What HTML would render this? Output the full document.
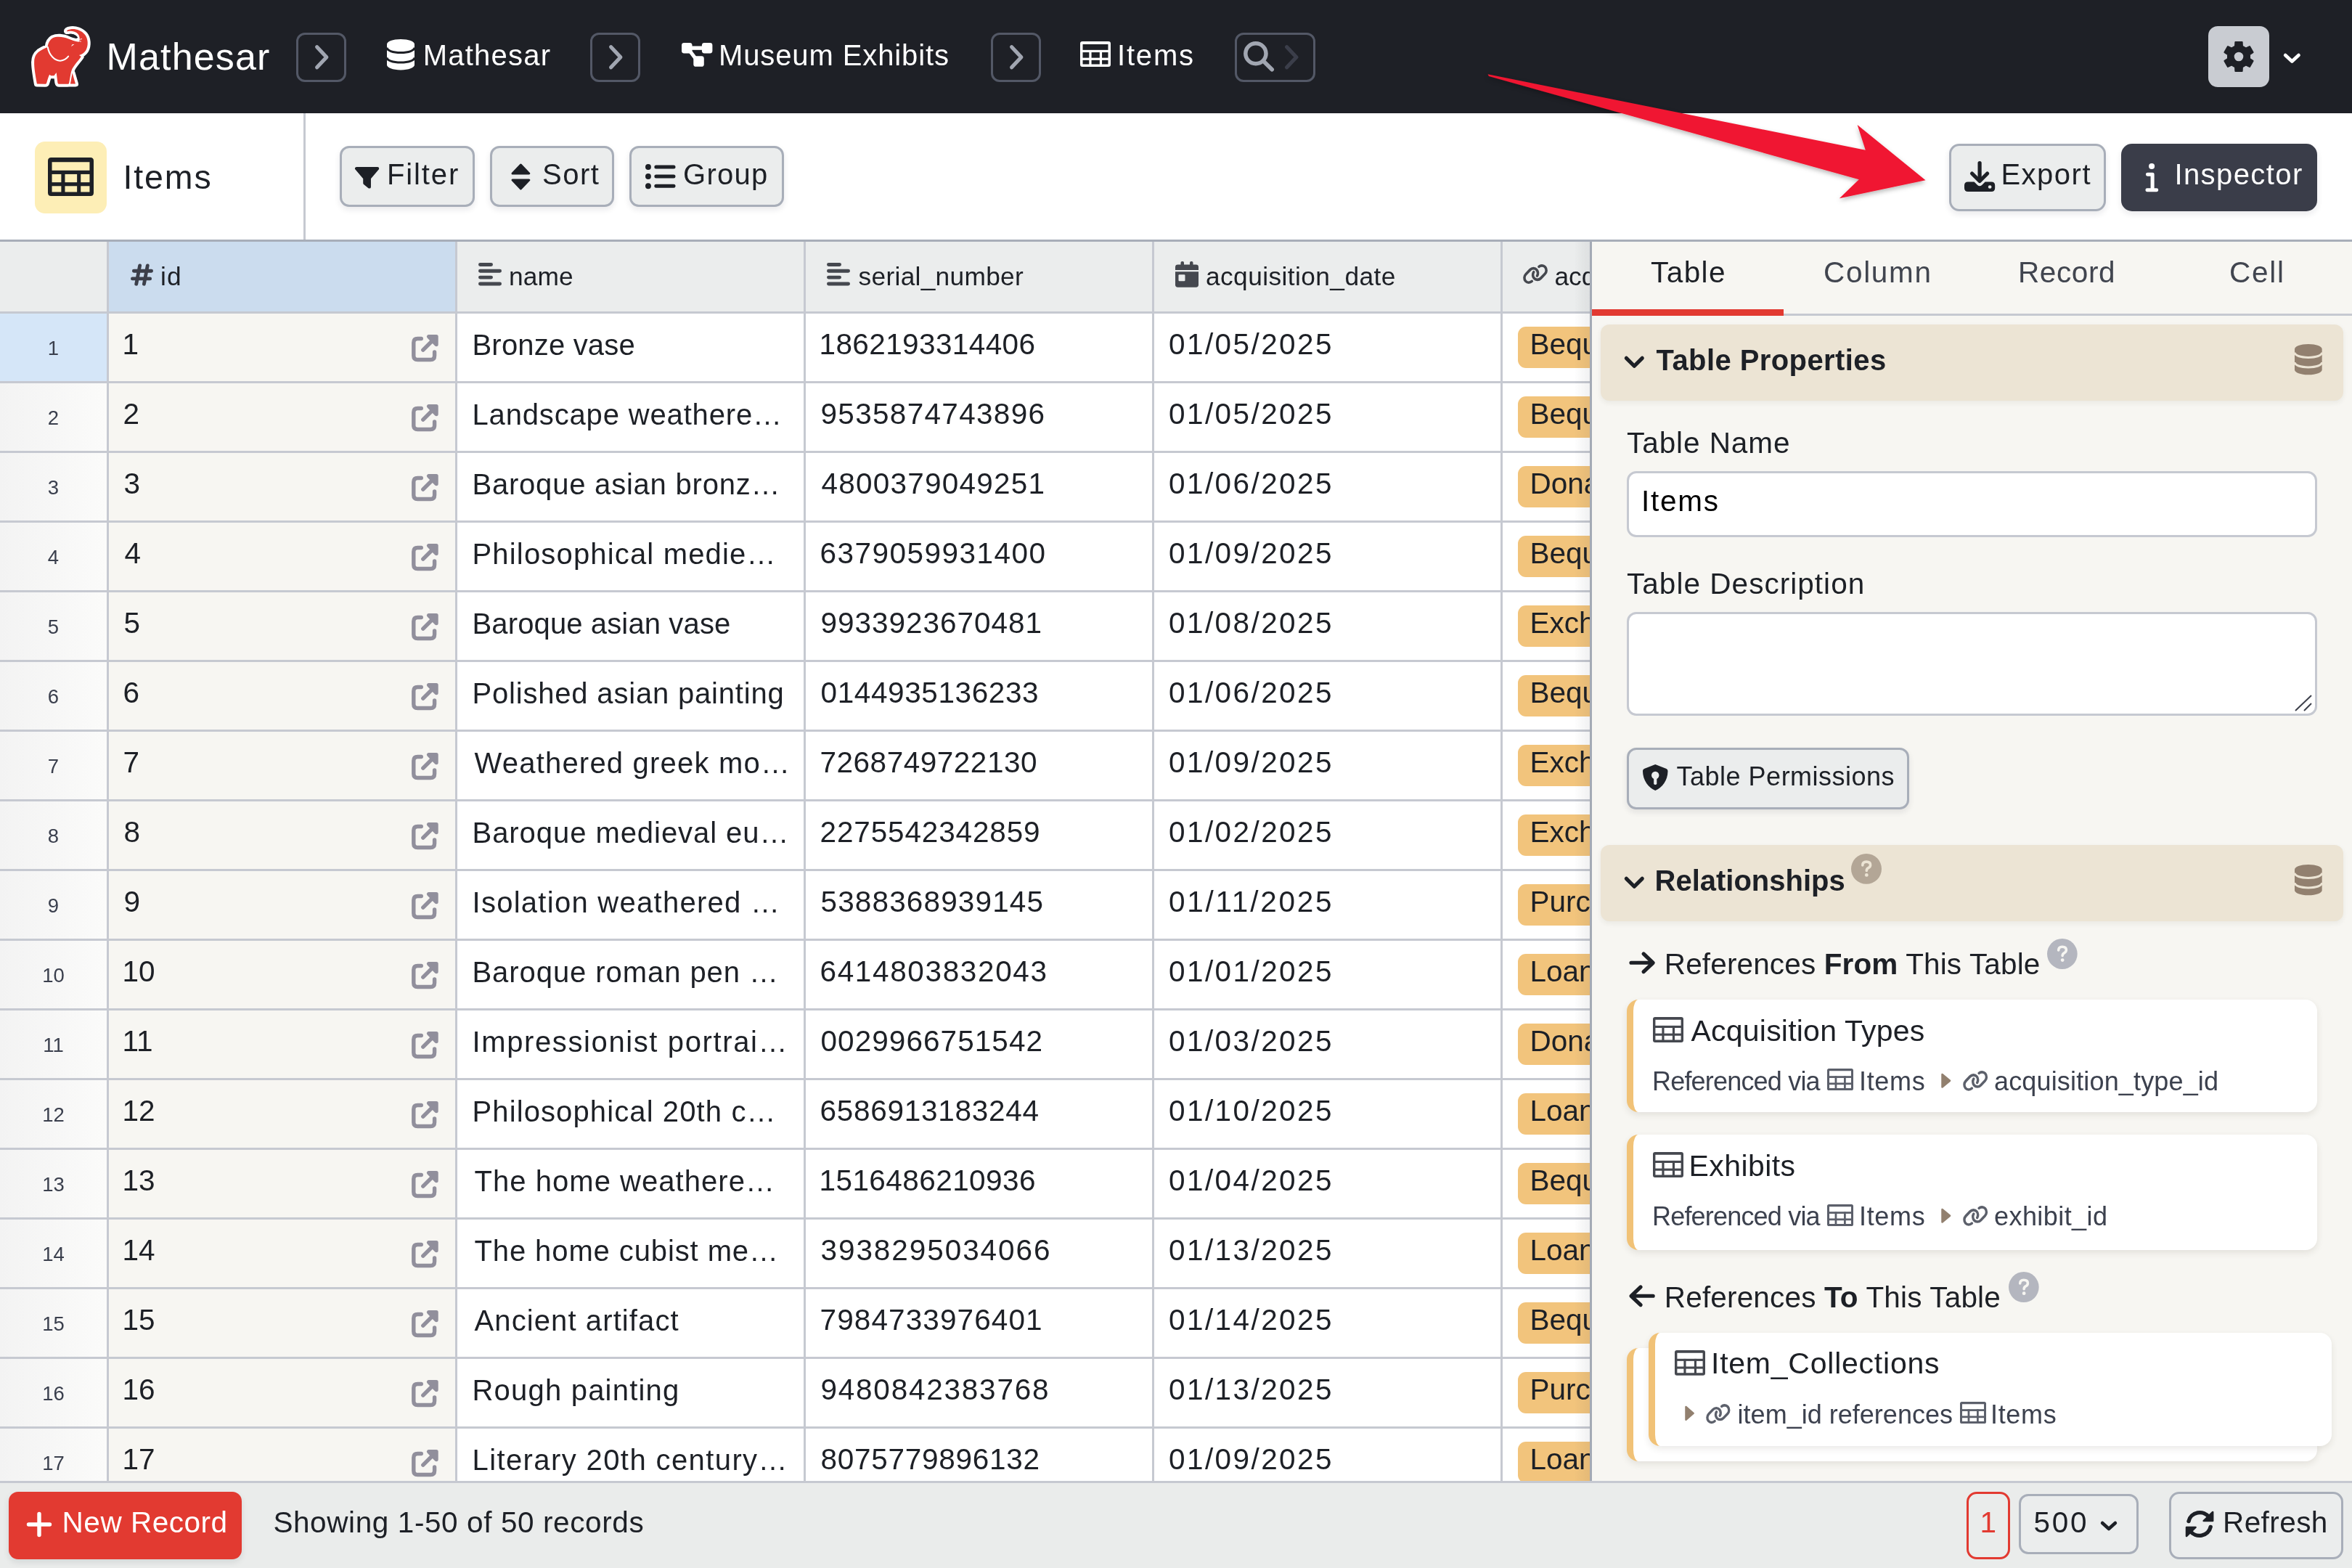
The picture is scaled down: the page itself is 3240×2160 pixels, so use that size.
<!DOCTYPE html>
<html lang="en"><head><meta charset="utf-8"><title>Items | Mathesar</title><style>
html,body{margin:0;padding:0}
body{width:3240px;height:2160px;position:relative;overflow:hidden;background:#fff;
 font-family:"Liberation Sans",sans-serif;-webkit-font-smoothing:antialiased}
#root{position:absolute;left:0;top:0;width:3240px;height:2160px;will-change:transform}
.a{position:absolute}
.t{position:absolute;white-space:pre;font-family:"Liberation Sans",sans-serif}
.t b{font-weight:700}
</style></head>
<body>
<div id="root">
<div class="a" style="left:0.0px;top:0.0px;width:3240.0px;height:156.0px;background:#1e2026;"></div>
<svg class="a" style="left:0;top:0;width:160px;height:156px" viewBox="0 0 160 156"><g transform="translate(30,25) scale(0.066934)"><path d="M312,1352 C285,1200 250,1010 256,900 C258,800 290,742 352,692 C405,652 470,622 532,596 C540,520 575,445 640,408 C720,372 850,380 960,425 C1030,452 1090,478 1175,488 C1200,440 1195,380 1160,330 C1120,280 1040,262 985,266 C955,268 935,275 925,268 C925,250 960,232 1010,226 C1110,215 1230,250 1300,340 C1365,425 1375,560 1320,660 C1290,710 1240,748 1180,762 L1222,790 C1160,880 1080,960 1040,1040 C1010,1100 1000,1200 975,1330 C970,1352 960,1356 940,1356 L770,1356 C750,1356 742,1345 738,1325 L712,1120 L665,1185 L600,1185 L570,1160 C545,1215 525,1280 512,1330 C508,1350 498,1356 480,1356 Z" fill="#fff" stroke="#fff" stroke-width="120" stroke-linejoin="round"/><path d="M1040,1128 L1105,1352 L1000,1352 Z" fill="#fff" stroke="#fff" stroke-width="120" stroke-linejoin="round"/><path d="M925,340 C1000,312 1110,325 1155,405 C1100,430 1000,392 925,340Z" fill="#1e2026"/><path d="M312,1352 C285,1200 250,1010 256,900 C258,800 290,742 352,692 C405,652 470,622 532,596 C540,520 575,445 640,408 C720,372 850,380 960,425 C1030,452 1090,478 1175,488 C1200,440 1195,380 1160,330 C1120,280 1040,262 985,266 C955,268 935,275 925,268 C925,250 960,232 1010,226 C1110,215 1230,250 1300,340 C1365,425 1375,560 1320,660 C1290,710 1240,748 1180,762 L1222,790 C1160,880 1080,960 1040,1040 C1010,1100 1000,1200 975,1330 C970,1352 960,1356 940,1356 L770,1356 C750,1356 742,1345 738,1325 L712,1120 L665,1185 L600,1185 L570,1160 C545,1215 525,1280 512,1330 C508,1350 498,1356 480,1356 Z" fill="#e23a31"/><path d="M1040,1128 L1105,1352 L1000,1352 Z" fill="#e23a31"/><path d="M535,598 C560,760 680,882 795,876 C862,870 922,832 958,786" fill="none" stroke="#fff" stroke-width="30" stroke-linecap="round"/><path d="M1022,585 C1022,545 1050,522 1082,548 C1055,548 1038,562 1022,585Z" fill="#fff"/><path d="M1180,440 L1235,428 M1175,470 L1215,480" stroke="#fff" stroke-width="14" stroke-linecap="round"/></g></svg>
<span class="t" style="left:146.50px;top:52.38px;font-size:52px;line-height:52px;color:#fff;letter-spacing:1.151px;">Mathesar</span>
<div class="a" style="left:408.0px;top:45.4px;width:68.5px;height:68.1px;box-sizing:border-box;border:3px solid #535866;border-radius:12px"></div>
<svg style="position:absolute;left:435.0px;top:62.5px;width:16.5px;height:31.5px;overflow:visible" viewBox="0 0 10 18" preserveAspectRatio="none" ><polyline points="1,1 9,9 1,17" fill="none" stroke="#a1a6b1" stroke-width="5.2" stroke-linecap="round" stroke-linejoin="round" vector-effect="non-scaling-stroke"/></svg>
<svg style="position:absolute;left:533.0px;top:54.0px;width:38.0px;height:42.4px;overflow:visible" viewBox="0 0 38 42" preserveAspectRatio="none" ><path fill="#fff" d="M0,7 C0,3 8,0 19,0 S38,3 38,7 V35 C38,39 30,42 19,42 S0,39 0,35Z"/><path fill="none" stroke="#1e2026" stroke-width="3" d="M0,11.500 C0,15.500 8,18.300 19,18.300 S38,15.500 38,11.500"/><path fill="none" stroke="#1e2026" stroke-width="3" d="M0,25 C0,29 8,31.800 19,31.800 S38,29 38,25"/></svg>
<span class="t" style="left:582.70px;top:55.94px;font-size:40px;line-height:40px;color:#fff;letter-spacing:1.226px;">Mathesar</span>
<div class="a" style="left:813.0px;top:45.4px;width:68.6px;height:68.1px;box-sizing:border-box;border:3px solid #535866;border-radius:12px"></div>
<svg style="position:absolute;left:840.0px;top:62.5px;width:16.5px;height:31.5px;overflow:visible" viewBox="0 0 10 18" preserveAspectRatio="none" ><polyline points="1,1 9,9 1,17" fill="none" stroke="#a1a6b1" stroke-width="5.2" stroke-linecap="round" stroke-linejoin="round" vector-effect="non-scaling-stroke"/></svg>
<svg style="position:absolute;left:938.8px;top:58.5px;width:42.4px;height:32.8px;overflow:visible" viewBox="0 0 42.4 32.8" preserveAspectRatio="none" ><g fill="#fff"><rect x="0" y="0" width="14.500" height="14.500" rx="3.400"/><rect x="27.900" y="0" width="14.500" height="14.500" rx="3.400"/><rect x="16.300" y="18.300" width="14.500" height="14.500" rx="3.400"/><rect x="12" y="4.500" width="18" height="5.300"/></g><path d="M11.500,11.500 L19.500,22" stroke="#fff" stroke-width="5" fill="none"/></svg>
<span class="t" style="left:990.00px;top:55.94px;font-size:40px;line-height:40px;color:#fff;letter-spacing:0.889px;">Museum Exhibits</span>
<div class="a" style="left:1365.0px;top:45.4px;width:68.7px;height:68.1px;box-sizing:border-box;border:3px solid #535866;border-radius:12px"></div>
<svg style="position:absolute;left:1392.0px;top:62.5px;width:16.5px;height:31.5px;overflow:visible" viewBox="0 0 10 18" preserveAspectRatio="none" ><polyline points="1,1 9,9 1,17" fill="none" stroke="#a1a6b1" stroke-width="5.2" stroke-linecap="round" stroke-linejoin="round" vector-effect="non-scaling-stroke"/></svg>
<svg style="position:absolute;left:1488.0px;top:57.0px;width:42.0px;height:35.0px;overflow:visible" viewBox="0 0 42 35" preserveAspectRatio="none" ><path fill="#fff" fill-rule="evenodd" d="M3,0 H39 Q42,0 42,3 V32 Q42,35 39,35 H3 Q0,35 0,32 V3 Q0,0 3,0Z M3.5,3.9200000000000004 V31.5 H38.5 V3.9200000000000004Z"/><g fill="#fff"><rect x="0" y="11.84" width="42" height="3.22"/><rect x="0" y="22.64" width="42" height="3.22"/><rect x="12.34" y="12" width="3.22" height="22"/><rect x="26.84" y="12" width="3.22" height="22"/></g></svg>
<span class="t" style="left:1539.00px;top:55.94px;font-size:40px;line-height:40px;color:#fff;letter-spacing:1.802px;">Items</span>
<div class="a" style="left:1701.0px;top:45.4px;width:110.5px;height:68.1px;box-sizing:border-box;border:3px solid #535866;border-radius:12px"></div>
<svg style="position:absolute;left:1713.0px;top:57.4px;width:42.0px;height:41.6px;overflow:visible" viewBox="0 0 42 42" preserveAspectRatio="none" ><circle cx="16.900" cy="16.900" r="14.100" fill="none" stroke="#a1a6b1" stroke-width="5.500"/><path d="M27.500,27.500 L39.200,39.200" stroke="#a1a6b1" stroke-width="5.600" stroke-linecap="round"/></svg>
<svg style="position:absolute;left:1770.5px;top:62.5px;width:16.5px;height:31.5px;overflow:visible" viewBox="0 0 10 18" preserveAspectRatio="none" ><polyline points="1,1 9,9 1,17" fill="none" stroke="#3b3e4a" stroke-width="5.2" stroke-linecap="round" stroke-linejoin="round" vector-effect="non-scaling-stroke"/></svg>
<div class="a" style="left:3041.9px;top:35.8px;width:84.1px;height:84.3px;background:#c9ccd2;border-radius:13px"></div>
<svg style="position:absolute;left:3063.4px;top:56.8px;width:42.0px;height:42.0px;overflow:visible" viewBox="0 0 42 42" preserveAspectRatio="none" ><path d="M16.15,6.59 L16.45,1.11 L25.55,1.11 L25.85,6.59 L31.05,9.60 L35.94,7.11 L40.50,15.00 L35.90,18.00 L35.90,24.00 L40.50,27.00 L35.94,34.89 L31.05,32.40 L25.85,35.41 L25.55,40.89 L16.45,40.89 L16.15,35.41 L10.95,32.40 L6.06,34.89 L1.50,27.00 L6.10,24.00 L6.10,18.00 L1.50,15.00 L6.06,7.11 L10.95,9.60Z M13.60,21.00 a7.40,7.40 0 1,0 14.80,0 a7.40,7.40 0 1,0 -14.80,0Z" fill="#1e2026" fill-rule="evenodd" stroke="#1e2026" stroke-width="2.2" stroke-linejoin="round"/></svg>
<svg style="position:absolute;left:3146.6px;top:75.0px;width:20.7px;height:10.6px;overflow:visible" viewBox="0 0 18 10" preserveAspectRatio="none" ><polyline points="1,1 9,9 17,1" fill="none" stroke="#fff" stroke-width="4.600" stroke-linecap="round" stroke-linejoin="round" vector-effect="non-scaling-stroke"/></svg>
<div class="a" style="left:0.0px;top:156.0px;width:3240.0px;height:174.0px;background:#fff;"></div>
<div class="a" style="left:48.0px;top:195.0px;width:99.0px;height:99.0px;background:#fdeeb6;border-radius:14px"></div>
<svg style="position:absolute;left:66.0px;top:217.0px;width:63.0px;height:53.0px;overflow:visible" viewBox="0 0 42 35" preserveAspectRatio="none" ><path fill="#1d2026" fill-rule="evenodd" d="M3,0 H39 Q42,0 42,3 V32 Q42,35 39,35 H3 Q0,35 0,32 V3 Q0,0 3,0Z M3.7,4.144000000000001 V31.3 H38.3 V4.144000000000001Z"/><g fill="#1d2026"><rect x="0" y="11.75" width="42" height="3.40"/><rect x="0" y="22.55" width="42" height="3.40"/><rect x="12.25" y="12" width="3.40" height="22"/><rect x="26.75" y="12" width="3.40" height="22"/></g></svg>
<span class="t" style="left:169.50px;top:221.34px;font-size:46.5px;line-height:46.5px;color:#1d2026;letter-spacing:1.891px;">Items</span>
<div class="a" style="left:417.5px;top:156.0px;width:3.0px;height:174.0px;background:#c6c9d1;"></div>
<div class="a" style="left:468.0px;top:201.0px;width:186.0px;height:84.0px;box-sizing:border-box;background:#ebeded;border:3px solid #a8aeb9;border-radius:13px;box-shadow:0 4px 8px rgba(20,25,40,.09);"></div>
<svg style="position:absolute;left:488.8px;top:229.6px;width:33.2px;height:29.8px;overflow:visible" viewBox="0 0 34 30" preserveAspectRatio="none" ><path fill="#1d2026" stroke="#1d2026" stroke-width="4.400" stroke-linejoin="round" d="M2.200,2.200 H31.800 L20.300,15.500 V27.600 L13.700,22.500 V15.500 Z"/></svg>
<span class="t" style="left:533.00px;top:220.44px;font-size:40px;line-height:40px;color:#1d2026;letter-spacing:1.887px;">Filter</span>
<div class="a" style="left:675.0px;top:201.0px;width:171.0px;height:84.0px;box-sizing:border-box;background:#ebeded;border:3px solid #a8aeb9;border-radius:13px;box-shadow:0 4px 8px rgba(20,25,40,.09);"></div>
<svg style="position:absolute;left:703.6px;top:224.5px;width:26.8px;height:37.0px;overflow:visible" viewBox="0 0 27 37" preserveAspectRatio="none" ><path fill="#1d2026" stroke="#1d2026" stroke-width="3" stroke-linejoin="round" d="M13.500,2 L25,14 H2Z"/><path fill="#1d2026" stroke="#1d2026" stroke-width="3" stroke-linejoin="round" d="M13.500,35 L25,23 H2Z"/></svg>
<span class="t" style="left:747.00px;top:220.44px;font-size:40px;line-height:40px;color:#1d2026;letter-spacing:1.485px;">Sort</span>
<div class="a" style="left:867.0px;top:201.0px;width:213.0px;height:84.0px;box-sizing:border-box;background:#ebeded;border:3px solid #a8aeb9;border-radius:13px;box-shadow:0 4px 8px rgba(20,25,40,.09);"></div>
<svg style="position:absolute;left:888.5px;top:225.8px;width:41.5px;height:34.2px;overflow:visible" viewBox="0 0 42 34" preserveAspectRatio="none" ><circle cx="4" cy="4" r="4" fill="#1d2026"/><path d="M15,4 H39.500" stroke="#1d2026" stroke-width="5" stroke-linecap="round"/><circle cx="4" cy="17" r="4" fill="#1d2026"/><path d="M15,17 H39.500" stroke="#1d2026" stroke-width="5" stroke-linecap="round"/><circle cx="4" cy="30" r="4" fill="#1d2026"/><path d="M15,30 H39.500" stroke="#1d2026" stroke-width="5" stroke-linecap="round"/></svg>
<span class="t" style="left:941.00px;top:220.44px;font-size:40px;line-height:40px;color:#1d2026;letter-spacing:1.269px;">Group</span>
<div class="a" style="left:2685.4px;top:198.0px;width:215.3px;height:92.8px;box-sizing:border-box;background:#ebeded;border:3px solid #a8aeb9;border-radius:14px;box-shadow:0 4px 8px rgba(20,25,40,.09);"></div>
<svg style="position:absolute;left:2705.8px;top:222.0px;width:42.2px;height:42.0px;overflow:visible" viewBox="0 0 42 42" preserveAspectRatio="none" ><path d="M21,2.500 V26" stroke="#1d2026" stroke-width="5.200" stroke-linecap="round" fill="none"/><path d="M10.500,17 L21,27.500 L31.500,17" stroke="#1d2026" stroke-width="5.200" stroke-linecap="round" stroke-linejoin="round" fill="none"/><path fill="#1d2026" d="M5,28.500 H13.500 L18,33 Q21,35.500 24,33 L28.500,28.500 H37 Q42,28.500 42,33.500 V37 Q42,42 37,42 H5 Q0,42 0,37 V33.500 Q0,28.500 5,28.500Z"/><circle cx="35" cy="35.500" r="2.300" fill="#ebeded"/></svg>
<span class="t" style="left:2756.40px;top:220.44px;font-size:40px;line-height:40px;color:#1d2026;letter-spacing:1.502px;">Export</span>
<div class="a" style="left:2921.9px;top:198.0px;width:270.4px;height:92.8px;box-sizing:border-box;background:#3a3d49;border-radius:15px;box-shadow:0 4px 8px rgba(20,25,40,.09);"></div>
<svg style="position:absolute;left:2955.8px;top:224.5px;width:16.2px;height:39.5px;overflow:visible" viewBox="0 0 16 40" preserveAspectRatio="none" ><circle cx="8" cy="4" r="4" fill="#fff"/><path d="M2.500,15.500 H9 V37 M2,37.300 H14.500" stroke="#fff" stroke-width="5" stroke-linecap="round" stroke-linejoin="round" fill="none"/></svg>
<span class="t" style="left:2995.40px;top:220.44px;font-size:40px;line-height:40px;color:#fff;letter-spacing:1.424px;">Inspector</span>
<svg class="a" style="left:0;top:0;width:3240px;height:400px;z-index:50" viewBox="0 0 3240 400"><defs><filter id="ash" x="-5%" y="-20%" width="110%" height="150%"><feDropShadow dx="0" dy="3" stdDeviation="3" flood-color="#000" flood-opacity=".28"/></filter></defs><path filter="url(#ash)" fill="#f01830" d="M2049.500,102.200 L2569.800,206.800 L2558.600,172 L2652.500,248.300 L2533.900,273.200 L2560.800,247.300 L2051,105 Z"/></svg>
<div class="a" style="left:0.0px;top:330.0px;width:3240.0px;height:3.0px;background:#a8aeb9;"></div>
<div class="a" style="left:0.0px;top:333.0px;width:2190.0px;height:1707.0px;background:#fff;"></div>
<div class="a" style="left:0.0px;top:333.0px;width:2190.0px;height:96.0px;background:#ebeded;"></div>
<div class="a" style="left:150.0px;top:333.0px;width:477.0px;height:96.0px;background:#cbdcee;"></div>
<div class="a" style="left:0.0px;top:432.0px;width:147.0px;height:1608.0px;background:#f7f7f7;background:linear-gradient(90deg,#f3f3f3,#fbfbfa)"></div>
<div class="a" style="left:0.0px;top:432.0px;width:147.0px;height:93.0px;background:#d5e6f8;"></div>
<div class="a" style="left:150.0px;top:432.0px;width:477.0px;height:1608.0px;background:#f7f6f2;"></div>
<div class="a" style="left:0.0px;top:429.0px;width:2190.0px;height:3.0px;background:#c6c9d1;"></div>
<div class="a" style="left:0.0px;top:525.0px;width:2190.0px;height:3.0px;background:#c6c9d1;"></div>
<div class="a" style="left:0.0px;top:621.0px;width:2190.0px;height:3.0px;background:#c6c9d1;"></div>
<div class="a" style="left:0.0px;top:717.0px;width:2190.0px;height:3.0px;background:#c6c9d1;"></div>
<div class="a" style="left:0.0px;top:813.0px;width:2190.0px;height:3.0px;background:#c6c9d1;"></div>
<div class="a" style="left:0.0px;top:909.0px;width:2190.0px;height:3.0px;background:#c6c9d1;"></div>
<div class="a" style="left:0.0px;top:1005.0px;width:2190.0px;height:3.0px;background:#c6c9d1;"></div>
<div class="a" style="left:0.0px;top:1101.0px;width:2190.0px;height:3.0px;background:#c6c9d1;"></div>
<div class="a" style="left:0.0px;top:1197.0px;width:2190.0px;height:3.0px;background:#c6c9d1;"></div>
<div class="a" style="left:0.0px;top:1293.0px;width:2190.0px;height:3.0px;background:#c6c9d1;"></div>
<div class="a" style="left:0.0px;top:1389.0px;width:2190.0px;height:3.0px;background:#c6c9d1;"></div>
<div class="a" style="left:0.0px;top:1485.0px;width:2190.0px;height:3.0px;background:#c6c9d1;"></div>
<div class="a" style="left:0.0px;top:1581.0px;width:2190.0px;height:3.0px;background:#c6c9d1;"></div>
<div class="a" style="left:0.0px;top:1677.0px;width:2190.0px;height:3.0px;background:#c6c9d1;"></div>
<div class="a" style="left:0.0px;top:1773.0px;width:2190.0px;height:3.0px;background:#c6c9d1;"></div>
<div class="a" style="left:0.0px;top:1869.0px;width:2190.0px;height:3.0px;background:#c6c9d1;"></div>
<div class="a" style="left:0.0px;top:1965.0px;width:2190.0px;height:3.0px;background:#c6c9d1;"></div>
<div class="a" style="left:147.0px;top:333.0px;width:3.0px;height:1707.0px;background:#c6c9d1;"></div>
<div class="a" style="left:627.0px;top:333.0px;width:3.0px;height:1707.0px;background:#c6c9d1;"></div>
<div class="a" style="left:1107.0px;top:333.0px;width:3.0px;height:1707.0px;background:#c6c9d1;"></div>
<div class="a" style="left:1587.0px;top:333.0px;width:3.0px;height:1707.0px;background:#c6c9d1;"></div>
<div class="a" style="left:2067.0px;top:333.0px;width:3.0px;height:1707.0px;background:#c6c9d1;"></div>
<svg style="position:absolute;left:179.5px;top:362.7px;width:31.0px;height:31.1px;overflow:visible" viewBox="0 0 32 32" preserveAspectRatio="none" ><g stroke="#3c3f4a" stroke-width="5" stroke-linecap="round" fill="none"><path d="M4.500,10.500 H29.500 M2.500,21.500 H27.500 M13,3 L8,29 M24,3 L19,29"/></g></svg>
<span class="t" style="left:221.00px;top:363.32px;font-size:35.3px;line-height:35.3px;color:#1d2026;letter-spacing:1.158px;">id</span>
<svg style="position:absolute;left:659.0px;top:362.4px;width:32.0px;height:31.4px;overflow:visible" viewBox="0 0 32 32" preserveAspectRatio="none" ><g stroke="#45484f" stroke-width="5" stroke-linecap="round" fill="none"><path d="M2.500,2.500 H17.500 M2.500,11.500 H29.500 M2.500,20.500 H17.500 M2.500,29.500 H29.500"/></g></svg>
<span class="t" style="left:701.00px;top:363.32px;font-size:35.3px;line-height:35.3px;color:#1d2026;letter-spacing:0.112px;">name</span>
<svg style="position:absolute;left:1139.0px;top:362.4px;width:32.0px;height:31.4px;overflow:visible" viewBox="0 0 32 32" preserveAspectRatio="none" ><g stroke="#45484f" stroke-width="5" stroke-linecap="round" fill="none"><path d="M2.500,2.500 H17.500 M2.500,11.500 H29.500 M2.500,20.500 H17.500 M2.500,29.500 H29.500"/></g></svg>
<span class="t" style="left:1182.60px;top:363.32px;font-size:35.3px;line-height:35.3px;color:#1d2026;letter-spacing:0.292px;">serial_number</span>
<svg style="position:absolute;left:1619.0px;top:359.7px;width:32.0px;height:35.7px;overflow:visible" viewBox="0 0 32 36" preserveAspectRatio="none" ><rect x="7.500" y="0" width="4.500" height="8" rx="2" fill="#45484f"/><rect x="20" y="0" width="4.500" height="8" rx="2" fill="#45484f"/><path fill="#45484f" d="M3.500,4.500 H28.500 Q32,4.500 32,8 V12 H0 V8 Q0,4.500 3.500,4.500Z"/><path fill="#45484f" d="M0,14.500 H32 V32.500 Q32,36 28.500,36 H3.500 Q0,36 0,32.500Z"/><rect x="4.500" y="18.500" width="9" height="9" rx="1.200" fill="#ebeded"/></svg>
<span class="t" style="left:1661.00px;top:363.32px;font-size:35.3px;line-height:35.3px;color:#1d2026;letter-spacing:0.415px;">acquisition_date</span>
<svg style="position:absolute;left:2098.0px;top:364.4px;width:34.0px;height:27.2px;overflow:visible" viewBox="460 385 900 695" preserveAspectRatio="none" ><g fill="none" stroke="#45484f" stroke-width="94" stroke-linecap="round"><path d="M785,985 C720,1040 620,1045 555,980 C490,910 500,800 565,735 L720,580 C790,510 900,515 960,580 C1015,640 1015,740 975,795"/><path d="M1040,470 C1100,420 1200,415 1265,480 C1330,550 1325,660 1260,725 L1105,880 C1035,950 925,945 865,880 C810,820 805,720 850,660"/></g></svg>
<span class="t" style="left:2141.40px;top:363.32px;font-size:35.3px;line-height:35.3px;color:#1d2026;letter-spacing:0.000px;clip-path:inset(-10px 0 -10px 0);">acquisition_type_id</span>
<div class="a" style="left:0;top:333px;width:2190px;height:1707px;overflow:hidden">
<span class="t" style="left:0;width:147px;text-align:center;top:132.92px;font-size:27.500px;line-height:27.500px;color:#3a3f4d">1</span>
<span class="t" style="left:168.50px;top:121.42px;font-size:40.5px;line-height:40.5px;color:#1d2026;letter-spacing:0.000px;">1</span>
<svg style="position:absolute;left:566.6px;top:128.4px;width:36.7px;height:37.3px;overflow:visible" viewBox="0 0 36.7 37.3" preserveAspectRatio="none" ><path d="M13.3,5.500 H8.300 Q2.800,5.500 2.800,11 V29 Q2.800,34.500 8.300,34.500 H26.200 Q31.600,34.500 31.600,29 V24" fill="none" stroke="#918f9c" stroke-width="5.400" stroke-linecap="round"/><path d="M15.800,21.200 L30,7" stroke="#918f9c" stroke-width="5.400" stroke-linecap="round" fill="none"/><path d="M23.500,2.600 H34.100 V13.600Z" fill="#918f9c" stroke="#918f9c" stroke-width="5.200" stroke-linejoin="round"/></svg>
<span class="t" style="left:650.50px;top:121.84px;font-size:40px;line-height:40px;color:#1d2026;letter-spacing:0.190px;">Bronze vase</span>
<span class="t" style="left:1128.50px;top:121.42px;font-size:40.5px;line-height:40.5px;color:#1d2026;letter-spacing:0.392px;">1862193314406</span>
<span class="t" style="left:1610.00px;top:121.42px;font-size:40.5px;line-height:40.5px;color:#1d2026;letter-spacing:2.425px;">01/05/2025</span>
<div class="a" style="left:2091px;top:117.0px;width:200px;height:57px;background:#f2c47c;border-radius:11px"></div>
<span class="t" style="left:2107.40px;top:121.42px;font-size:40.5px;line-height:40.5px;color:#1d2026;letter-spacing:0.000px;">Bequest</span>
<span class="t" style="left:0;width:147px;text-align:center;top:228.92px;font-size:27.500px;line-height:27.500px;color:#3a3f4d">2</span>
<span class="t" style="left:169.50px;top:217.42px;font-size:40.5px;line-height:40.5px;color:#1d2026;letter-spacing:0.000px;">2</span>
<svg style="position:absolute;left:566.6px;top:224.4px;width:36.7px;height:37.3px;overflow:visible" viewBox="0 0 36.7 37.3" preserveAspectRatio="none" ><path d="M13.3,5.500 H8.300 Q2.800,5.500 2.800,11 V29 Q2.800,34.500 8.300,34.500 H26.200 Q31.600,34.500 31.600,29 V24" fill="none" stroke="#918f9c" stroke-width="5.400" stroke-linecap="round"/><path d="M15.800,21.200 L30,7" stroke="#918f9c" stroke-width="5.400" stroke-linecap="round" fill="none"/><path d="M23.500,2.600 H34.100 V13.600Z" fill="#918f9c" stroke="#918f9c" stroke-width="5.200" stroke-linejoin="round"/></svg>
<span class="t" style="left:650.50px;top:217.84px;font-size:40px;line-height:40px;color:#1d2026;letter-spacing:0.840px;">Landscape weathere…</span>
<span class="t" style="left:1130.50px;top:217.42px;font-size:40.5px;line-height:40.5px;color:#1d2026;letter-spacing:1.309px;">9535874743896</span>
<span class="t" style="left:1610.00px;top:217.42px;font-size:40.5px;line-height:40.5px;color:#1d2026;letter-spacing:2.425px;">01/05/2025</span>
<div class="a" style="left:2091px;top:213.0px;width:200px;height:57px;background:#f2c47c;border-radius:11px"></div>
<span class="t" style="left:2107.40px;top:217.42px;font-size:40.5px;line-height:40.5px;color:#1d2026;letter-spacing:0.000px;">Bequest</span>
<span class="t" style="left:0;width:147px;text-align:center;top:324.92px;font-size:27.500px;line-height:27.500px;color:#3a3f4d">3</span>
<span class="t" style="left:170.50px;top:313.42px;font-size:40.5px;line-height:40.5px;color:#1d2026;letter-spacing:0.000px;">3</span>
<svg style="position:absolute;left:566.6px;top:320.4px;width:36.7px;height:37.3px;overflow:visible" viewBox="0 0 36.7 37.3" preserveAspectRatio="none" ><path d="M13.3,5.500 H8.300 Q2.800,5.500 2.800,11 V29 Q2.800,34.500 8.300,34.500 H26.200 Q31.600,34.500 31.600,29 V24" fill="none" stroke="#918f9c" stroke-width="5.400" stroke-linecap="round"/><path d="M15.800,21.200 L30,7" stroke="#918f9c" stroke-width="5.400" stroke-linecap="round" fill="none"/><path d="M23.500,2.600 H34.100 V13.600Z" fill="#918f9c" stroke="#918f9c" stroke-width="5.200" stroke-linejoin="round"/></svg>
<span class="t" style="left:650.50px;top:313.84px;font-size:40px;line-height:40px;color:#1d2026;letter-spacing:0.782px;">Baroque asian bronz…</span>
<span class="t" style="left:1131.50px;top:313.42px;font-size:40.5px;line-height:40.5px;color:#1d2026;letter-spacing:1.226px;">4800379049251</span>
<span class="t" style="left:1610.00px;top:313.42px;font-size:40.5px;line-height:40.5px;color:#1d2026;letter-spacing:2.425px;">01/06/2025</span>
<div class="a" style="left:2091px;top:309.0px;width:200px;height:57px;background:#f2c47c;border-radius:11px"></div>
<span class="t" style="left:2107.40px;top:313.42px;font-size:40.5px;line-height:40.5px;color:#1d2026;letter-spacing:0.000px;">Donation</span>
<span class="t" style="left:0;width:147px;text-align:center;top:420.92px;font-size:27.500px;line-height:27.500px;color:#3a3f4d">4</span>
<span class="t" style="left:171.50px;top:409.42px;font-size:40.5px;line-height:40.5px;color:#1d2026;letter-spacing:0.000px;">4</span>
<svg style="position:absolute;left:566.6px;top:416.4px;width:36.7px;height:37.3px;overflow:visible" viewBox="0 0 36.7 37.3" preserveAspectRatio="none" ><path d="M13.3,5.500 H8.300 Q2.800,5.500 2.800,11 V29 Q2.800,34.500 8.300,34.500 H26.200 Q31.600,34.500 31.600,29 V24" fill="none" stroke="#918f9c" stroke-width="5.400" stroke-linecap="round"/><path d="M15.800,21.200 L30,7" stroke="#918f9c" stroke-width="5.400" stroke-linecap="round" fill="none"/><path d="M23.500,2.600 H34.100 V13.600Z" fill="#918f9c" stroke="#918f9c" stroke-width="5.200" stroke-linejoin="round"/></svg>
<span class="t" style="left:650.50px;top:409.84px;font-size:40px;line-height:40px;color:#1d2026;letter-spacing:1.170px;">Philosophical medie…</span>
<span class="t" style="left:1129.50px;top:409.42px;font-size:40.5px;line-height:40.5px;color:#1d2026;letter-spacing:1.476px;">6379059931400</span>
<span class="t" style="left:1610.00px;top:409.42px;font-size:40.5px;line-height:40.5px;color:#1d2026;letter-spacing:2.425px;">01/09/2025</span>
<div class="a" style="left:2091px;top:405.0px;width:200px;height:57px;background:#f2c47c;border-radius:11px"></div>
<span class="t" style="left:2107.40px;top:409.42px;font-size:40.5px;line-height:40.5px;color:#1d2026;letter-spacing:0.000px;">Bequest</span>
<span class="t" style="left:0;width:147px;text-align:center;top:516.92px;font-size:27.500px;line-height:27.500px;color:#3a3f4d">5</span>
<span class="t" style="left:170.50px;top:505.42px;font-size:40.5px;line-height:40.5px;color:#1d2026;letter-spacing:0.000px;">5</span>
<svg style="position:absolute;left:566.6px;top:512.4px;width:36.7px;height:37.3px;overflow:visible" viewBox="0 0 36.7 37.3" preserveAspectRatio="none" ><path d="M13.3,5.500 H8.300 Q2.800,5.500 2.800,11 V29 Q2.800,34.500 8.300,34.500 H26.200 Q31.600,34.500 31.600,29 V24" fill="none" stroke="#918f9c" stroke-width="5.400" stroke-linecap="round"/><path d="M15.800,21.200 L30,7" stroke="#918f9c" stroke-width="5.400" stroke-linecap="round" fill="none"/><path d="M23.500,2.600 H34.100 V13.600Z" fill="#918f9c" stroke="#918f9c" stroke-width="5.200" stroke-linejoin="round"/></svg>
<span class="t" style="left:650.50px;top:505.84px;font-size:40px;line-height:40px;color:#1d2026;letter-spacing:0.128px;">Baroque asian vase</span>
<span class="t" style="left:1130.50px;top:505.42px;font-size:40.5px;line-height:40.5px;color:#1d2026;letter-spacing:0.976px;">9933923670481</span>
<span class="t" style="left:1610.00px;top:505.42px;font-size:40.5px;line-height:40.5px;color:#1d2026;letter-spacing:2.425px;">01/08/2025</span>
<div class="a" style="left:2091px;top:501.0px;width:200px;height:57px;background:#f2c47c;border-radius:11px"></div>
<span class="t" style="left:2107.40px;top:505.42px;font-size:40.5px;line-height:40.5px;color:#1d2026;letter-spacing:0.000px;">Exchange</span>
<span class="t" style="left:0;width:147px;text-align:center;top:612.92px;font-size:27.500px;line-height:27.500px;color:#3a3f4d">6</span>
<span class="t" style="left:169.50px;top:601.42px;font-size:40.5px;line-height:40.5px;color:#1d2026;letter-spacing:0.000px;">6</span>
<svg style="position:absolute;left:566.6px;top:608.4px;width:36.7px;height:37.3px;overflow:visible" viewBox="0 0 36.7 37.3" preserveAspectRatio="none" ><path d="M13.3,5.500 H8.300 Q2.800,5.500 2.800,11 V29 Q2.800,34.500 8.300,34.500 H26.200 Q31.600,34.500 31.600,29 V24" fill="none" stroke="#918f9c" stroke-width="5.400" stroke-linecap="round"/><path d="M15.800,21.200 L30,7" stroke="#918f9c" stroke-width="5.400" stroke-linecap="round" fill="none"/><path d="M23.500,2.600 H34.100 V13.600Z" fill="#918f9c" stroke="#918f9c" stroke-width="5.200" stroke-linejoin="round"/></svg>
<span class="t" style="left:650.50px;top:601.84px;font-size:40px;line-height:40px;color:#1d2026;letter-spacing:0.811px;">Polished asian painting</span>
<span class="t" style="left:1130.50px;top:601.42px;font-size:40.5px;line-height:40.5px;color:#1d2026;letter-spacing:0.601px;">0144935136233</span>
<span class="t" style="left:1610.00px;top:601.42px;font-size:40.5px;line-height:40.5px;color:#1d2026;letter-spacing:2.425px;">01/06/2025</span>
<div class="a" style="left:2091px;top:597.0px;width:200px;height:57px;background:#f2c47c;border-radius:11px"></div>
<span class="t" style="left:2107.40px;top:601.42px;font-size:40.5px;line-height:40.5px;color:#1d2026;letter-spacing:0.000px;">Bequest</span>
<span class="t" style="left:0;width:147px;text-align:center;top:708.92px;font-size:27.500px;line-height:27.500px;color:#3a3f4d">7</span>
<span class="t" style="left:169.50px;top:697.42px;font-size:40.5px;line-height:40.5px;color:#1d2026;letter-spacing:0.000px;">7</span>
<svg style="position:absolute;left:566.6px;top:704.4px;width:36.7px;height:37.3px;overflow:visible" viewBox="0 0 36.7 37.3" preserveAspectRatio="none" ><path d="M13.3,5.500 H8.300 Q2.800,5.500 2.800,11 V29 Q2.800,34.500 8.300,34.500 H26.200 Q31.600,34.500 31.600,29 V24" fill="none" stroke="#918f9c" stroke-width="5.400" stroke-linecap="round"/><path d="M15.800,21.200 L30,7" stroke="#918f9c" stroke-width="5.400" stroke-linecap="round" fill="none"/><path d="M23.500,2.600 H34.100 V13.600Z" fill="#918f9c" stroke="#918f9c" stroke-width="5.200" stroke-linejoin="round"/></svg>
<span class="t" style="left:653.50px;top:697.84px;font-size:40px;line-height:40px;color:#1d2026;letter-spacing:1.206px;">Weathered greek mo…</span>
<span class="t" style="left:1129.50px;top:697.42px;font-size:40.5px;line-height:40.5px;color:#1d2026;letter-spacing:0.517px;">7268749722130</span>
<span class="t" style="left:1610.00px;top:697.42px;font-size:40.5px;line-height:40.5px;color:#1d2026;letter-spacing:2.425px;">01/09/2025</span>
<div class="a" style="left:2091px;top:693.0px;width:200px;height:57px;background:#f2c47c;border-radius:11px"></div>
<span class="t" style="left:2107.40px;top:697.42px;font-size:40.5px;line-height:40.5px;color:#1d2026;letter-spacing:0.000px;">Exchange</span>
<span class="t" style="left:0;width:147px;text-align:center;top:804.92px;font-size:27.500px;line-height:27.500px;color:#3a3f4d">8</span>
<span class="t" style="left:170.50px;top:793.42px;font-size:40.5px;line-height:40.5px;color:#1d2026;letter-spacing:0.000px;">8</span>
<svg style="position:absolute;left:566.6px;top:800.4px;width:36.7px;height:37.3px;overflow:visible" viewBox="0 0 36.7 37.3" preserveAspectRatio="none" ><path d="M13.3,5.500 H8.300 Q2.800,5.500 2.800,11 V29 Q2.800,34.500 8.300,34.500 H26.200 Q31.600,34.500 31.600,29 V24" fill="none" stroke="#918f9c" stroke-width="5.400" stroke-linecap="round"/><path d="M15.800,21.200 L30,7" stroke="#918f9c" stroke-width="5.400" stroke-linecap="round" fill="none"/><path d="M23.500,2.600 H34.100 V13.600Z" fill="#918f9c" stroke="#918f9c" stroke-width="5.200" stroke-linejoin="round"/></svg>
<span class="t" style="left:650.50px;top:793.84px;font-size:40px;line-height:40px;color:#1d2026;letter-spacing:0.946px;">Baroque medieval eu…</span>
<span class="t" style="left:1129.50px;top:793.42px;font-size:40.5px;line-height:40.5px;color:#1d2026;letter-spacing:0.851px;">2275542342859</span>
<span class="t" style="left:1610.00px;top:793.42px;font-size:40.5px;line-height:40.5px;color:#1d2026;letter-spacing:2.425px;">01/02/2025</span>
<div class="a" style="left:2091px;top:789.0px;width:200px;height:57px;background:#f2c47c;border-radius:11px"></div>
<span class="t" style="left:2107.40px;top:793.42px;font-size:40.5px;line-height:40.5px;color:#1d2026;letter-spacing:0.000px;">Exchange</span>
<span class="t" style="left:0;width:147px;text-align:center;top:900.92px;font-size:27.500px;line-height:27.500px;color:#3a3f4d">9</span>
<span class="t" style="left:170.50px;top:889.42px;font-size:40.5px;line-height:40.5px;color:#1d2026;letter-spacing:0.000px;">9</span>
<svg style="position:absolute;left:566.6px;top:896.4px;width:36.7px;height:37.3px;overflow:visible" viewBox="0 0 36.7 37.3" preserveAspectRatio="none" ><path d="M13.3,5.500 H8.300 Q2.800,5.500 2.800,11 V29 Q2.800,34.500 8.300,34.500 H26.200 Q31.600,34.500 31.600,29 V24" fill="none" stroke="#918f9c" stroke-width="5.400" stroke-linecap="round"/><path d="M15.800,21.200 L30,7" stroke="#918f9c" stroke-width="5.400" stroke-linecap="round" fill="none"/><path d="M23.500,2.600 H34.100 V13.600Z" fill="#918f9c" stroke="#918f9c" stroke-width="5.200" stroke-linejoin="round"/></svg>
<span class="t" style="left:650.50px;top:889.84px;font-size:40px;line-height:40px;color:#1d2026;letter-spacing:1.275px;">Isolation weathered …</span>
<span class="t" style="left:1130.50px;top:889.42px;font-size:40.5px;line-height:40.5px;color:#1d2026;letter-spacing:1.142px;">5388368939145</span>
<span class="t" style="left:1610.00px;top:889.42px;font-size:40.5px;line-height:40.5px;color:#1d2026;letter-spacing:2.759px;">01/11/2025</span>
<div class="a" style="left:2091px;top:885.0px;width:200px;height:57px;background:#f2c47c;border-radius:11px"></div>
<span class="t" style="left:2107.40px;top:889.42px;font-size:40.5px;line-height:40.5px;color:#1d2026;letter-spacing:0.000px;">Purchase</span>
<span class="t" style="left:0;width:147px;text-align:center;top:996.92px;font-size:27.500px;line-height:27.500px;color:#3a3f4d">10</span>
<span class="t" style="left:168.50px;top:985.42px;font-size:40.5px;line-height:40.5px;color:#1d2026;letter-spacing:0.000px;">10</span>
<svg style="position:absolute;left:566.6px;top:992.4px;width:36.7px;height:37.3px;overflow:visible" viewBox="0 0 36.7 37.3" preserveAspectRatio="none" ><path d="M13.3,5.500 H8.300 Q2.800,5.500 2.800,11 V29 Q2.800,34.500 8.300,34.500 H26.200 Q31.600,34.500 31.600,29 V24" fill="none" stroke="#918f9c" stroke-width="5.400" stroke-linecap="round"/><path d="M15.800,21.200 L30,7" stroke="#918f9c" stroke-width="5.400" stroke-linecap="round" fill="none"/><path d="M23.500,2.600 H34.100 V13.600Z" fill="#918f9c" stroke="#918f9c" stroke-width="5.200" stroke-linejoin="round"/></svg>
<span class="t" style="left:650.50px;top:985.84px;font-size:40px;line-height:40px;color:#1d2026;letter-spacing:0.934px;">Baroque roman pen …</span>
<span class="t" style="left:1129.50px;top:985.42px;font-size:40.5px;line-height:40.5px;color:#1d2026;letter-spacing:1.642px;">6414803832043</span>
<span class="t" style="left:1610.00px;top:985.42px;font-size:40.5px;line-height:40.5px;color:#1d2026;letter-spacing:2.425px;">01/01/2025</span>
<div class="a" style="left:2091px;top:981.0px;width:200px;height:57px;background:#f2c47c;border-radius:11px"></div>
<span class="t" style="left:2107.40px;top:985.42px;font-size:40.5px;line-height:40.5px;color:#1d2026;letter-spacing:0.000px;">Loan</span>
<span class="t" style="left:0;width:147px;text-align:center;top:1092.92px;font-size:27.500px;line-height:27.500px;color:#3a3f4d">11</span>
<span class="t" style="left:168.50px;top:1081.42px;font-size:40.5px;line-height:40.5px;color:#1d2026;letter-spacing:0.000px;">11</span>
<svg style="position:absolute;left:566.6px;top:1088.4px;width:36.7px;height:37.3px;overflow:visible" viewBox="0 0 36.7 37.3" preserveAspectRatio="none" ><path d="M13.3,5.500 H8.300 Q2.800,5.500 2.800,11 V29 Q2.800,34.500 8.300,34.500 H26.200 Q31.600,34.500 31.600,29 V24" fill="none" stroke="#918f9c" stroke-width="5.400" stroke-linecap="round"/><path d="M15.800,21.200 L30,7" stroke="#918f9c" stroke-width="5.400" stroke-linecap="round" fill="none"/><path d="M23.500,2.600 H34.100 V13.600Z" fill="#918f9c" stroke="#918f9c" stroke-width="5.200" stroke-linejoin="round"/></svg>
<span class="t" style="left:650.50px;top:1081.84px;font-size:40px;line-height:40px;color:#1d2026;letter-spacing:1.613px;">Impressionist portrai…</span>
<span class="t" style="left:1130.50px;top:1081.42px;font-size:40.5px;line-height:40.5px;color:#1d2026;letter-spacing:1.059px;">0029966751542</span>
<span class="t" style="left:1610.00px;top:1081.42px;font-size:40.5px;line-height:40.5px;color:#1d2026;letter-spacing:2.425px;">01/03/2025</span>
<div class="a" style="left:2091px;top:1077.0px;width:200px;height:57px;background:#f2c47c;border-radius:11px"></div>
<span class="t" style="left:2107.40px;top:1081.42px;font-size:40.5px;line-height:40.5px;color:#1d2026;letter-spacing:0.000px;">Donation</span>
<span class="t" style="left:0;width:147px;text-align:center;top:1188.92px;font-size:27.500px;line-height:27.500px;color:#3a3f4d">12</span>
<span class="t" style="left:168.50px;top:1177.42px;font-size:40.5px;line-height:40.5px;color:#1d2026;letter-spacing:0.000px;">12</span>
<svg style="position:absolute;left:566.6px;top:1184.4px;width:36.7px;height:37.3px;overflow:visible" viewBox="0 0 36.7 37.3" preserveAspectRatio="none" ><path d="M13.3,5.500 H8.300 Q2.800,5.500 2.800,11 V29 Q2.800,34.500 8.300,34.500 H26.200 Q31.600,34.500 31.600,29 V24" fill="none" stroke="#918f9c" stroke-width="5.400" stroke-linecap="round"/><path d="M15.800,21.200 L30,7" stroke="#918f9c" stroke-width="5.400" stroke-linecap="round" fill="none"/><path d="M23.500,2.600 H34.100 V13.600Z" fill="#918f9c" stroke="#918f9c" stroke-width="5.200" stroke-linejoin="round"/></svg>
<span class="t" style="left:650.50px;top:1177.84px;font-size:40px;line-height:40px;color:#1d2026;letter-spacing:1.111px;">Philosophical 20th c…</span>
<span class="t" style="left:1129.50px;top:1177.42px;font-size:40.5px;line-height:40.5px;color:#1d2026;letter-spacing:0.726px;">6586913183244</span>
<span class="t" style="left:1610.00px;top:1177.42px;font-size:40.5px;line-height:40.5px;color:#1d2026;letter-spacing:2.425px;">01/10/2025</span>
<div class="a" style="left:2091px;top:1173.0px;width:200px;height:57px;background:#f2c47c;border-radius:11px"></div>
<span class="t" style="left:2107.40px;top:1177.42px;font-size:40.5px;line-height:40.5px;color:#1d2026;letter-spacing:0.000px;">Loan</span>
<span class="t" style="left:0;width:147px;text-align:center;top:1284.92px;font-size:27.500px;line-height:27.500px;color:#3a3f4d">13</span>
<span class="t" style="left:168.50px;top:1273.42px;font-size:40.5px;line-height:40.5px;color:#1d2026;letter-spacing:0.000px;">13</span>
<svg style="position:absolute;left:566.6px;top:1280.4px;width:36.7px;height:37.3px;overflow:visible" viewBox="0 0 36.7 37.3" preserveAspectRatio="none" ><path d="M13.3,5.500 H8.300 Q2.800,5.500 2.800,11 V29 Q2.800,34.500 8.300,34.500 H26.200 Q31.600,34.500 31.600,29 V24" fill="none" stroke="#918f9c" stroke-width="5.400" stroke-linecap="round"/><path d="M15.800,21.200 L30,7" stroke="#918f9c" stroke-width="5.400" stroke-linecap="round" fill="none"/><path d="M23.500,2.600 H34.100 V13.600Z" fill="#918f9c" stroke="#918f9c" stroke-width="5.200" stroke-linejoin="round"/></svg>
<span class="t" style="left:653.50px;top:1273.84px;font-size:40px;line-height:40px;color:#1d2026;letter-spacing:1.043px;">The home weathere…</span>
<span class="t" style="left:1128.50px;top:1273.42px;font-size:40.5px;line-height:40.5px;color:#1d2026;letter-spacing:0.434px;">1516486210936</span>
<span class="t" style="left:1610.00px;top:1273.42px;font-size:40.5px;line-height:40.5px;color:#1d2026;letter-spacing:2.425px;">01/04/2025</span>
<div class="a" style="left:2091px;top:1269.0px;width:200px;height:57px;background:#f2c47c;border-radius:11px"></div>
<span class="t" style="left:2107.40px;top:1273.42px;font-size:40.5px;line-height:40.5px;color:#1d2026;letter-spacing:0.000px;">Bequest</span>
<span class="t" style="left:0;width:147px;text-align:center;top:1380.92px;font-size:27.500px;line-height:27.500px;color:#3a3f4d">14</span>
<span class="t" style="left:168.50px;top:1369.42px;font-size:40.5px;line-height:40.5px;color:#1d2026;letter-spacing:0.000px;">14</span>
<svg style="position:absolute;left:566.6px;top:1376.4px;width:36.7px;height:37.3px;overflow:visible" viewBox="0 0 36.7 37.3" preserveAspectRatio="none" ><path d="M13.3,5.500 H8.300 Q2.800,5.500 2.800,11 V29 Q2.800,34.500 8.300,34.500 H26.200 Q31.600,34.500 31.600,29 V24" fill="none" stroke="#918f9c" stroke-width="5.400" stroke-linecap="round"/><path d="M15.800,21.200 L30,7" stroke="#918f9c" stroke-width="5.400" stroke-linecap="round" fill="none"/><path d="M23.500,2.600 H34.100 V13.600Z" fill="#918f9c" stroke="#918f9c" stroke-width="5.200" stroke-linejoin="round"/></svg>
<span class="t" style="left:653.50px;top:1369.84px;font-size:40px;line-height:40px;color:#1d2026;letter-spacing:0.895px;">The home cubist me…</span>
<span class="t" style="left:1130.50px;top:1369.42px;font-size:40.5px;line-height:40.5px;color:#1d2026;letter-spacing:1.934px;">3938295034066</span>
<span class="t" style="left:1610.00px;top:1369.42px;font-size:40.5px;line-height:40.5px;color:#1d2026;letter-spacing:2.425px;">01/13/2025</span>
<div class="a" style="left:2091px;top:1365.0px;width:200px;height:57px;background:#f2c47c;border-radius:11px"></div>
<span class="t" style="left:2107.40px;top:1369.42px;font-size:40.5px;line-height:40.5px;color:#1d2026;letter-spacing:0.000px;">Loan</span>
<span class="t" style="left:0;width:147px;text-align:center;top:1476.92px;font-size:27.500px;line-height:27.500px;color:#3a3f4d">15</span>
<span class="t" style="left:168.50px;top:1465.42px;font-size:40.5px;line-height:40.5px;color:#1d2026;letter-spacing:0.000px;">15</span>
<svg style="position:absolute;left:566.6px;top:1472.4px;width:36.7px;height:37.3px;overflow:visible" viewBox="0 0 36.7 37.3" preserveAspectRatio="none" ><path d="M13.3,5.500 H8.300 Q2.800,5.500 2.800,11 V29 Q2.800,34.500 8.300,34.500 H26.200 Q31.600,34.500 31.600,29 V24" fill="none" stroke="#918f9c" stroke-width="5.400" stroke-linecap="round"/><path d="M15.800,21.200 L30,7" stroke="#918f9c" stroke-width="5.400" stroke-linecap="round" fill="none"/><path d="M23.500,2.600 H34.100 V13.600Z" fill="#918f9c" stroke="#918f9c" stroke-width="5.200" stroke-linejoin="round"/></svg>
<span class="t" style="left:653.50px;top:1465.84px;font-size:40px;line-height:40px;color:#1d2026;letter-spacing:1.103px;">Ancient artifact</span>
<span class="t" style="left:1129.50px;top:1465.42px;font-size:40.5px;line-height:40.5px;color:#1d2026;letter-spacing:1.101px;">7984733976401</span>
<span class="t" style="left:1610.00px;top:1465.42px;font-size:40.5px;line-height:40.5px;color:#1d2026;letter-spacing:2.425px;">01/14/2025</span>
<div class="a" style="left:2091px;top:1461.0px;width:200px;height:57px;background:#f2c47c;border-radius:11px"></div>
<span class="t" style="left:2107.40px;top:1465.42px;font-size:40.5px;line-height:40.5px;color:#1d2026;letter-spacing:0.000px;">Bequest</span>
<span class="t" style="left:0;width:147px;text-align:center;top:1572.92px;font-size:27.500px;line-height:27.500px;color:#3a3f4d">16</span>
<span class="t" style="left:168.50px;top:1561.42px;font-size:40.5px;line-height:40.5px;color:#1d2026;letter-spacing:0.000px;">16</span>
<svg style="position:absolute;left:566.6px;top:1568.4px;width:36.7px;height:37.3px;overflow:visible" viewBox="0 0 36.7 37.3" preserveAspectRatio="none" ><path d="M13.3,5.500 H8.300 Q2.800,5.500 2.800,11 V29 Q2.800,34.500 8.300,34.500 H26.200 Q31.600,34.500 31.600,29 V24" fill="none" stroke="#918f9c" stroke-width="5.400" stroke-linecap="round"/><path d="M15.800,21.200 L30,7" stroke="#918f9c" stroke-width="5.400" stroke-linecap="round" fill="none"/><path d="M23.500,2.600 H34.100 V13.600Z" fill="#918f9c" stroke="#918f9c" stroke-width="5.200" stroke-linejoin="round"/></svg>
<span class="t" style="left:650.50px;top:1561.84px;font-size:40px;line-height:40px;color:#1d2026;letter-spacing:1.203px;">Rough painting</span>
<span class="t" style="left:1130.50px;top:1561.42px;font-size:40.5px;line-height:40.5px;color:#1d2026;letter-spacing:1.767px;">9480842383768</span>
<span class="t" style="left:1610.00px;top:1561.42px;font-size:40.5px;line-height:40.5px;color:#1d2026;letter-spacing:2.425px;">01/13/2025</span>
<div class="a" style="left:2091px;top:1557.0px;width:200px;height:57px;background:#f2c47c;border-radius:11px"></div>
<span class="t" style="left:2107.40px;top:1561.42px;font-size:40.5px;line-height:40.5px;color:#1d2026;letter-spacing:0.000px;">Purchase</span>
<span class="t" style="left:0;width:147px;text-align:center;top:1668.92px;font-size:27.500px;line-height:27.500px;color:#3a3f4d">17</span>
<span class="t" style="left:168.50px;top:1657.42px;font-size:40.5px;line-height:40.5px;color:#1d2026;letter-spacing:0.000px;">17</span>
<svg style="position:absolute;left:566.6px;top:1664.4px;width:36.7px;height:37.3px;overflow:visible" viewBox="0 0 36.7 37.3" preserveAspectRatio="none" ><path d="M13.3,5.500 H8.300 Q2.800,5.500 2.800,11 V29 Q2.800,34.500 8.300,34.500 H26.200 Q31.600,34.500 31.600,29 V24" fill="none" stroke="#918f9c" stroke-width="5.400" stroke-linecap="round"/><path d="M15.800,21.200 L30,7" stroke="#918f9c" stroke-width="5.400" stroke-linecap="round" fill="none"/><path d="M23.500,2.600 H34.100 V13.600Z" fill="#918f9c" stroke="#918f9c" stroke-width="5.200" stroke-linejoin="round"/></svg>
<span class="t" style="left:650.50px;top:1657.84px;font-size:40px;line-height:40px;color:#1d2026;letter-spacing:1.399px;">Literary 20th century…</span>
<span class="t" style="left:1130.50px;top:1657.42px;font-size:40.5px;line-height:40.5px;color:#1d2026;letter-spacing:0.726px;">8075779896132</span>
<span class="t" style="left:1610.00px;top:1657.42px;font-size:40.5px;line-height:40.5px;color:#1d2026;letter-spacing:2.425px;">01/09/2025</span>
<div class="a" style="left:2091px;top:1653.0px;width:200px;height:57px;background:#f2c47c;border-radius:11px"></div>
<span class="t" style="left:2107.40px;top:1657.42px;font-size:40.5px;line-height:40.5px;color:#1d2026;letter-spacing:0.000px;">Loan</span>
</div>
<div class="a" style="left:2168.0px;top:333.0px;width:22.0px;height:1707.0px;background:transparent;background:linear-gradient(90deg,rgba(40,45,60,0),rgba(40,45,60,.065))"></div>
<div class="a" style="left:2190.0px;top:333.0px;width:1050.0px;height:1707.0px;background:#f7f6f2;"></div>
<div class="a" style="left:2190.0px;top:333.0px;width:3.0px;height:1707.0px;background:#a4aab5;"></div>
<span class="t" style="left:2274.00px;top:355.12px;font-size:40.5px;line-height:40.5px;color:#1d2026;letter-spacing:1.426px;">Table</span>
<span class="t" style="left:2512.00px;top:355.12px;font-size:40.5px;line-height:40.5px;color:#41454f;letter-spacing:1.694px;">Column</span>
<span class="t" style="left:2780.00px;top:355.12px;font-size:40.5px;line-height:40.5px;color:#41454f;letter-spacing:0.593px;">Record</span>
<span class="t" style="left:3071.00px;top:355.12px;font-size:40.5px;line-height:40.5px;color:#41454f;letter-spacing:1.743px;">Cell</span>
<div class="a" style="left:2193.0px;top:431.7px;width:1047.0px;height:3.1px;background:#c6c9d1;"></div>
<div class="a" style="left:2193.0px;top:426.0px;width:264.0px;height:8.8px;background:#e23a31;"></div>
<div class="a" style="left:2205px;top:446.8px;width:1022.6px;height:104.8px;background:#ece4d4;border-radius:12px;box-shadow:0 3px 7px rgba(60,50,30,.07)"></div><svg style="position:absolute;left:2238.6px;top:492.0px;width:24.6px;height:13.6px;overflow:visible" viewBox="0 0 18 10" preserveAspectRatio="none" ><polyline points="1,1 9,9 17,1" fill="none" stroke="#1d2026" stroke-width="5.200" stroke-linecap="round" stroke-linejoin="round" vector-effect="non-scaling-stroke"/></svg><span class="t" style="left:2281.50px;top:476.14px;font-size:40px;line-height:40px;color:#1d2026;letter-spacing:0.418px;font-weight:700;">Table Properties</span><svg style="position:absolute;left:3161.0px;top:473.8px;width:37.7px;height:42.2px;overflow:visible" viewBox="0 0 38 42" preserveAspectRatio="none" ><path fill="#92806f" d="M0,7 C0,3 8,0 19,0 S38,3 38,7 V35 C38,39 30,42 19,42 S0,39 0,35Z"/><path fill="none" stroke="#ece4d4" stroke-width="3" d="M0,11.500 C0,15.500 8,18.300 19,18.300 S38,15.500 38,11.500"/><path fill="none" stroke="#ece4d4" stroke-width="3" d="M0,25 C0,29 8,31.800 19,31.800 S38,29 38,25"/></svg>
<span class="t" style="left:2241.00px;top:589.72px;font-size:40.5px;line-height:40.5px;color:#1d2026;letter-spacing:0.935px;">Table Name</span>
<div class="a" style="left:2241px;top:649px;width:950.800px;height:91.300px;box-sizing:border-box;background:#fff;border:3px solid #c6c9d1;border-radius:13px"></div>
<span class="t" style="left:2261.00px;top:670.12px;font-size:40.5px;line-height:40.5px;color:#000;letter-spacing:1.734px;">Items</span>
<span class="t" style="left:2241.00px;top:784.32px;font-size:40.5px;line-height:40.5px;color:#1d2026;letter-spacing:1.036px;">Table Description</span>
<div class="a" style="left:2241px;top:843.400px;width:950.800px;height:143.100px;box-sizing:border-box;background:#fff;border:3px solid #c6c9d1;border-radius:13px"></div>
<svg style="position:absolute;left:3160.0px;top:957.0px;width:26.0px;height:24.0px;overflow:visible" viewBox="0 0 26 24" preserveAspectRatio="none" ><path d="M2,22 L24,1 M14,22 L24,12" stroke="#3c3f4a" stroke-width="2" fill="none"/></svg>
<div class="a" style="left:2241.0px;top:1029.6px;width:389.0px;height:85.1px;box-sizing:border-box;background:#ebeded;border:3px solid #a8aeb9;border-radius:13px;box-shadow:0 4px 8px rgba(20,25,40,.09);"></div>
<svg style="position:absolute;left:2263.4px;top:1053.0px;width:34.5px;height:36.0px;overflow:visible" viewBox="0 0 35 36" preserveAspectRatio="none" ><path fill="#1d2026" d="M17.500,0 L33,6 Q35,7 35,9 C35,22 27,32 17.500,36 C8,32 0,22 0,9 Q0,7 2,6Z"/><circle cx="17.500" cy="15" r="5.300" fill="#ebeded"/><rect x="15.400" y="16" width="4.200" height="12" rx="1.800" fill="#ebeded"/></svg>
<span class="t" style="left:2309.60px;top:1052.13px;font-size:36px;line-height:36px;color:#1d2026;letter-spacing:0.493px;">Table Permissions</span>
<div class="a" style="left:2205px;top:1163.7px;width:1022.6px;height:105.1px;background:#ece4d4;border-radius:12px;box-shadow:0 3px 7px rgba(60,50,30,.07)"></div><svg style="position:absolute;left:2238.6px;top:1209.0px;width:24.6px;height:13.6px;overflow:visible" viewBox="0 0 18 10" preserveAspectRatio="none" ><polyline points="1,1 9,9 17,1" fill="none" stroke="#1d2026" stroke-width="5.200" stroke-linecap="round" stroke-linejoin="round" vector-effect="non-scaling-stroke"/></svg><span class="t" style="left:2279.50px;top:1193.19px;font-size:40px;line-height:40px;color:#1d2026;letter-spacing:-0.002px;font-weight:700;">Relationships</span><svg style="position:absolute;left:3161.0px;top:1190.8px;width:37.7px;height:42.2px;overflow:visible" viewBox="0 0 38 42" preserveAspectRatio="none" ><path fill="#92806f" d="M0,7 C0,3 8,0 19,0 S38,3 38,7 V35 C38,39 30,42 19,42 S0,39 0,35Z"/><path fill="none" stroke="#ece4d4" stroke-width="3" d="M0,11.500 C0,15.500 8,18.300 19,18.300 S38,15.500 38,11.500"/><path fill="none" stroke="#ece4d4" stroke-width="3" d="M0,25 C0,29 8,31.800 19,31.800 S38,29 38,25"/></svg>
<svg style="position:absolute;left:2550.0px;top:1176.0px;width:42.0px;height:41.8px;overflow:visible" viewBox="0 0 42 42" preserveAspectRatio="none" ><circle cx="21" cy="21" r="21" fill="#b3a696"/><path d="M15.800,16 Q15.800,11.200 21,11.200 Q26.600,11.200 26.600,15.600 Q26.600,18.400 23.600,19.800 Q21.300,21 21.300,23.600" fill="none" stroke="#ece4d4" stroke-width="3.600" stroke-linecap="round"/><circle cx="21.300" cy="29.600" r="2.400" fill="#ece4d4"/></svg>
<svg style="position:absolute;left:2243.8px;top:1310.9px;width:36.2px;height:30.6px;overflow:visible" viewBox="0 0 36 31" preserveAspectRatio="none" ><path d="M3,15.500 H32 M20,3 L33,15.500 L20,28" stroke="#1d2026" stroke-width="5.200" stroke-linecap="round" stroke-linejoin="round" fill="none"/></svg>
<span class="t" style="left:2292.80px;top:1307.72px;font-size:40.5px;line-height:40.5px;color:#1d2026;letter-spacing:0.140px;">References <b>From</b> This Table</span>
<svg style="position:absolute;left:2820.3px;top:1292.8px;width:41.7px;height:42.0px;overflow:visible" viewBox="0 0 42 42" preserveAspectRatio="none" ><circle cx="21" cy="21" r="21" fill="#b4b6bf"/><path d="M15.800,16 Q15.800,11.200 21,11.200 Q26.600,11.200 26.600,15.600 Q26.600,18.400 23.600,19.800 Q21.300,21 21.300,23.600" fill="none" stroke="#f7f6f2" stroke-width="3.600" stroke-linecap="round"/><circle cx="21.300" cy="29.600" r="2.400" fill="#f7f6f2"/></svg>
<div class="a" style="left:2241.0px;top:1376.7px;width:951.3px;height:155.6px;box-sizing:border-box;background:#fff;border-left:9.500px solid #f1c277;border-radius:16px;box-shadow:0 4px 10px rgba(60,50,30,.10)"></div><svg style="position:absolute;left:2277.0px;top:1401.0px;width:42.0px;height:34.9px;overflow:visible" viewBox="0 0 42 35" preserveAspectRatio="none" ><path fill="#45484f" fill-rule="evenodd" d="M3,0 H39 Q42,0 42,3 V32 Q42,35 39,35 H3 Q0,35 0,32 V3 Q0,0 3,0Z M3.4,3.8080000000000003 V31.6 H38.6 V3.8080000000000003Z"/><g fill="#45484f"><rect x="0" y="11.89" width="42" height="3.13"/><rect x="0" y="22.69" width="42" height="3.13"/><rect x="12.39" y="12" width="3.13" height="22"/><rect x="26.89" y="12" width="3.13" height="22"/></g></svg><span class="t" style="left:2329.50px;top:1399.89px;font-size:41px;line-height:41px;color:#1d2026;letter-spacing:0.216px;">Acquisition Types</span><span class="t" style="left:2276.00px;top:1472.03px;font-size:36px;line-height:36px;color:#3c414e;letter-spacing:-0.809px;">Referenced via</span><svg style="position:absolute;left:2517.0px;top:1472.4px;width:36.0px;height:30.1px;overflow:visible" viewBox="0 0 42 35" preserveAspectRatio="none" ><path fill="#5c606b" fill-rule="evenodd" d="M3,0 H39 Q42,0 42,3 V32 Q42,35 39,35 H3 Q0,35 0,32 V3 Q0,0 3,0Z M3.5,3.9200000000000004 V31.5 H38.5 V3.9200000000000004Z"/><g fill="#5c606b"><rect x="0" y="11.84" width="42" height="3.22"/><rect x="0" y="22.64" width="42" height="3.22"/><rect x="12.34" y="12" width="3.22" height="22"/><rect x="26.84" y="12" width="3.22" height="22"/></g></svg><span class="t" style="left:2561.00px;top:1472.03px;font-size:36px;line-height:36px;color:#3c414e;letter-spacing:0.672px;">Items</span><svg style="position:absolute;left:2674.4px;top:1477.5px;width:13.6px;height:21.5px;overflow:visible" viewBox="0 0 13.500 22" preserveAspectRatio="none" ><path d="M1.500,2 L12,11 L1.500,20Z" fill="#92806f" stroke="#92806f" stroke-width="2.500" stroke-linejoin="round"/></svg><svg style="position:absolute;left:2703.7px;top:1475.0px;width:34.3px;height:28.0px;overflow:visible" viewBox="460 385 900 695" preserveAspectRatio="none" ><g fill="none" stroke="#5c606b" stroke-width="90" stroke-linecap="round"><path d="M785,985 C720,1040 620,1045 555,980 C490,910 500,800 565,735 L720,580 C790,510 900,515 960,580 C1015,640 1015,740 975,795"/><path d="M1040,470 C1100,420 1200,415 1265,480 C1330,550 1325,660 1260,725 L1105,880 C1035,950 925,945 865,880 C810,820 805,720 850,660"/></g></svg><span class="t" style="left:2747.00px;top:1472.03px;font-size:36px;line-height:36px;color:#3c414e;letter-spacing:0.156px;">acquisition_type_id</span>
<div class="a" style="left:2241.0px;top:1563.0px;width:951.3px;height:158.9px;box-sizing:border-box;background:#fff;border-left:9.500px solid #f1c277;border-radius:16px;box-shadow:0 4px 10px rgba(60,50,30,.10)"></div><svg style="position:absolute;left:2277.0px;top:1587.3px;width:42.0px;height:34.9px;overflow:visible" viewBox="0 0 42 35" preserveAspectRatio="none" ><path fill="#45484f" fill-rule="evenodd" d="M3,0 H39 Q42,0 42,3 V32 Q42,35 39,35 H3 Q0,35 0,32 V3 Q0,0 3,0Z M3.4,3.8080000000000003 V31.6 H38.6 V3.8080000000000003Z"/><g fill="#45484f"><rect x="0" y="11.89" width="42" height="3.13"/><rect x="0" y="22.69" width="42" height="3.13"/><rect x="12.39" y="12" width="3.13" height="22"/><rect x="26.89" y="12" width="3.13" height="22"/></g></svg><span class="t" style="left:2326.50px;top:1586.19px;font-size:41px;line-height:41px;color:#1d2026;letter-spacing:0.420px;">Exhibits</span><span class="t" style="left:2276.00px;top:1658.33px;font-size:36px;line-height:36px;color:#3c414e;letter-spacing:-0.809px;">Referenced via</span><svg style="position:absolute;left:2517.0px;top:1658.7px;width:36.0px;height:30.1px;overflow:visible" viewBox="0 0 42 35" preserveAspectRatio="none" ><path fill="#5c606b" fill-rule="evenodd" d="M3,0 H39 Q42,0 42,3 V32 Q42,35 39,35 H3 Q0,35 0,32 V3 Q0,0 3,0Z M3.5,3.9200000000000004 V31.5 H38.5 V3.9200000000000004Z"/><g fill="#5c606b"><rect x="0" y="11.84" width="42" height="3.22"/><rect x="0" y="22.64" width="42" height="3.22"/><rect x="12.34" y="12" width="3.22" height="22"/><rect x="26.84" y="12" width="3.22" height="22"/></g></svg><span class="t" style="left:2561.00px;top:1658.33px;font-size:36px;line-height:36px;color:#3c414e;letter-spacing:0.672px;">Items</span><svg style="position:absolute;left:2674.4px;top:1663.8px;width:13.6px;height:21.5px;overflow:visible" viewBox="0 0 13.500 22" preserveAspectRatio="none" ><path d="M1.500,2 L12,11 L1.500,20Z" fill="#92806f" stroke="#92806f" stroke-width="2.500" stroke-linejoin="round"/></svg><svg style="position:absolute;left:2703.7px;top:1661.3px;width:34.3px;height:28.0px;overflow:visible" viewBox="460 385 900 695" preserveAspectRatio="none" ><g fill="none" stroke="#5c606b" stroke-width="90" stroke-linecap="round"><path d="M785,985 C720,1040 620,1045 555,980 C490,910 500,800 565,735 L720,580 C790,510 900,515 960,580 C1015,640 1015,740 975,795"/><path d="M1040,470 C1100,420 1200,415 1265,480 C1330,550 1325,660 1260,725 L1105,880 C1035,950 925,945 865,880 C810,820 805,720 850,660"/></g></svg><span class="t" style="left:2747.00px;top:1658.33px;font-size:36px;line-height:36px;color:#3c414e;letter-spacing:0.435px;">exhibit_id</span>
<svg style="position:absolute;left:2243.8px;top:1770.0px;width:36.2px;height:30.6px;overflow:visible" viewBox="0 0 36 31" preserveAspectRatio="none" ><path d="M33,15.500 H4 M16,3 L3,15.500 L16,28" stroke="#1d2026" stroke-width="5.200" stroke-linecap="round" stroke-linejoin="round" fill="none"/></svg>
<span class="t" style="left:2292.80px;top:1766.72px;font-size:40.5px;line-height:40.5px;color:#1d2026;letter-spacing:0.164px;">References <b>To</b> This Table</span>
<svg style="position:absolute;left:2766.5px;top:1751.8px;width:41.7px;height:42.1px;overflow:visible" viewBox="0 0 42 42" preserveAspectRatio="none" ><circle cx="21" cy="21" r="21" fill="#b4b6bf"/><path d="M15.800,16 Q15.800,11.200 21,11.200 Q26.600,11.200 26.600,15.600 Q26.600,18.400 23.600,19.800 Q21.300,21 21.300,23.600" fill="none" stroke="#f7f6f2" stroke-width="3.600" stroke-linecap="round"/><circle cx="21.300" cy="29.600" r="2.400" fill="#f7f6f2"/></svg>
<div class="a" style="left:2241.0px;top:1857.0px;width:951.3px;height:155.7px;box-sizing:border-box;background:#fff;border-left:9.500px solid #f1c277;border-radius:16px;box-shadow:0 4px 10px rgba(60,50,30,.10)"></div>
<div class="a" style="left:2271.3px;top:1835.8px;width:941.2px;height:155.9px;box-sizing:border-box;background:#fff;border-left:9.500px solid #f1c277;border-radius:16px;box-shadow:0 4px 10px rgba(60,50,30,.10)"></div>
<svg style="position:absolute;left:2307.0px;top:1860.0px;width:42.0px;height:34.7px;overflow:visible" viewBox="0 0 42 35" preserveAspectRatio="none" ><path fill="#45484f" fill-rule="evenodd" d="M3,0 H39 Q42,0 42,3 V32 Q42,35 39,35 H3 Q0,35 0,32 V3 Q0,0 3,0Z M3.4,3.8080000000000003 V31.6 H38.6 V3.8080000000000003Z"/><g fill="#45484f"><rect x="0" y="11.89" width="42" height="3.13"/><rect x="0" y="22.69" width="42" height="3.13"/><rect x="12.39" y="12" width="3.13" height="22"/><rect x="26.89" y="12" width="3.13" height="22"/></g></svg>
<span class="t" style="left:2357.00px;top:1857.99px;font-size:41px;line-height:41px;color:#1d2026;letter-spacing:0.762px;">Item_Collections</span>
<svg style="position:absolute;left:2320.8px;top:1936.0px;width:13.2px;height:21.7px;overflow:visible" viewBox="0 0 13.500 22" preserveAspectRatio="none" ><path d="M1.500,2 L12,11 L1.500,20Z" fill="#92806f" stroke="#92806f" stroke-width="2.500" stroke-linejoin="round"/></svg>
<svg style="position:absolute;left:2350.4px;top:1934.0px;width:33.6px;height:27.5px;overflow:visible" viewBox="460 385 900 695" preserveAspectRatio="none" ><g fill="none" stroke="#5c606b" stroke-width="90" stroke-linecap="round"><path d="M785,985 C720,1040 620,1045 555,980 C490,910 500,800 565,735 L720,580 C790,510 900,515 960,580 C1015,640 1015,740 975,795"/><path d="M1040,470 C1100,420 1200,415 1265,480 C1330,550 1325,660 1260,725 L1105,880 C1035,950 925,945 865,880 C810,820 805,720 850,660"/></g></svg>
<span class="t" style="left:2393.60px;top:1931.03px;font-size:36px;line-height:36px;color:#3c414e;letter-spacing:0.015px;">item_id references</span>
<svg style="position:absolute;left:2700.0px;top:1931.4px;width:36.0px;height:30.1px;overflow:visible" viewBox="0 0 42 35" preserveAspectRatio="none" ><path fill="#5c606b" fill-rule="evenodd" d="M3,0 H39 Q42,0 42,3 V32 Q42,35 39,35 H3 Q0,35 0,32 V3 Q0,0 3,0Z M3.5,3.9200000000000004 V31.5 H38.5 V3.9200000000000004Z"/><g fill="#5c606b"><rect x="0" y="11.84" width="42" height="3.22"/><rect x="0" y="22.64" width="42" height="3.22"/><rect x="12.34" y="12" width="3.22" height="22"/><rect x="26.84" y="12" width="3.22" height="22"/></g></svg>
<span class="t" style="left:2742.00px;top:1931.03px;font-size:36px;line-height:36px;color:#3c414e;letter-spacing:0.672px;">Items</span>
<div class="a" style="left:0.0px;top:2040.0px;width:3240.0px;height:120.0px;background:#eaeceb;"></div>
<div class="a" style="left:0.0px;top:2040.3px;width:3240.0px;height:3.0px;background:#c6c9d1;"></div>
<div class="a" style="left:12px;top:2054.800px;width:321px;height:92.800px;background:#e23a31;border-radius:13px;box-shadow:0 4px 8px rgba(20,25,40,.10)"></div>
<svg style="position:absolute;left:37.0px;top:2083.0px;width:34.0px;height:34.0px;overflow:visible" viewBox="0 0 34 34" preserveAspectRatio="none" ><path d="M17,2.500 V31.500 M2.500,17 H31.500" stroke="#fff" stroke-width="5.400" stroke-linecap="round" fill="none"/></svg>
<span class="t" style="left:85.60px;top:2077.42px;font-size:40.5px;line-height:40.5px;color:#fff;letter-spacing:0.522px;">New Record</span>
<span class="t" style="left:376.40px;top:2077.42px;font-size:40.5px;line-height:40.5px;color:#1d2026;letter-spacing:0.598px;">Showing 1-50 of 50 records</span>
<div class="a" style="left:2709px;top:2055px;width:60px;height:92.600px;box-sizing:border-box;border:3px solid #e23a31;border-radius:14px"></div>
<span class="t" style="left:2727.50px;top:2077.42px;font-size:40.5px;line-height:40.5px;color:#e23a31;letter-spacing:0.000px;">1</span>
<div class="a" style="left:2781.0px;top:2058.0px;width:165.0px;height:83.4px;box-sizing:border-box;background:#ebeded;border:3px solid #a8aeb9;border-radius:13px;"></div>
<span class="t" style="left:2801.60px;top:2077.42px;font-size:40.5px;line-height:40.5px;color:#1d2026;letter-spacing:2.676px;">500</span>
<svg style="position:absolute;left:2895.0px;top:2097.0px;width:20.0px;height:10.0px;overflow:visible" viewBox="0 0 18 10" preserveAspectRatio="none" ><polyline points="1,1 9,9 17,1" fill="none" stroke="#1d2026" stroke-width="4.600" stroke-linecap="round" stroke-linejoin="round" vector-effect="non-scaling-stroke"/></svg>
<div class="a" style="left:2987.9px;top:2055.0px;width:239.7px;height:92.6px;box-sizing:border-box;background:#ebeded;border:3px solid #a8aeb9;border-radius:14px;"></div>
<svg style="position:absolute;left:3009.8px;top:2081.0px;width:40.2px;height:37.0px;overflow:visible" viewBox="0 0 40 38" preserveAspectRatio="none" ><g fill="none" stroke="#1d2026" stroke-width="5.400" stroke-linecap="round"><path d="M5,15 A15.500,15.500 0 0,1 33,9.500"/><path d="M35,23 A15.500,15.500 0 0,1 7,28.500"/></g><path fill="#1d2026" stroke="#1d2026" stroke-width="2.500" stroke-linejoin="round" d="M38,2 V14.500 H25.500Z"/><path fill="#1d2026" stroke="#1d2026" stroke-width="2.500" stroke-linejoin="round" d="M2,36 V23.500 H14.500Z"/></svg>
<span class="t" style="left:3062.00px;top:2077.42px;font-size:40.5px;line-height:40.5px;color:#1d2026;letter-spacing:0.419px;">Refresh</span>
</div>
</body></html>
